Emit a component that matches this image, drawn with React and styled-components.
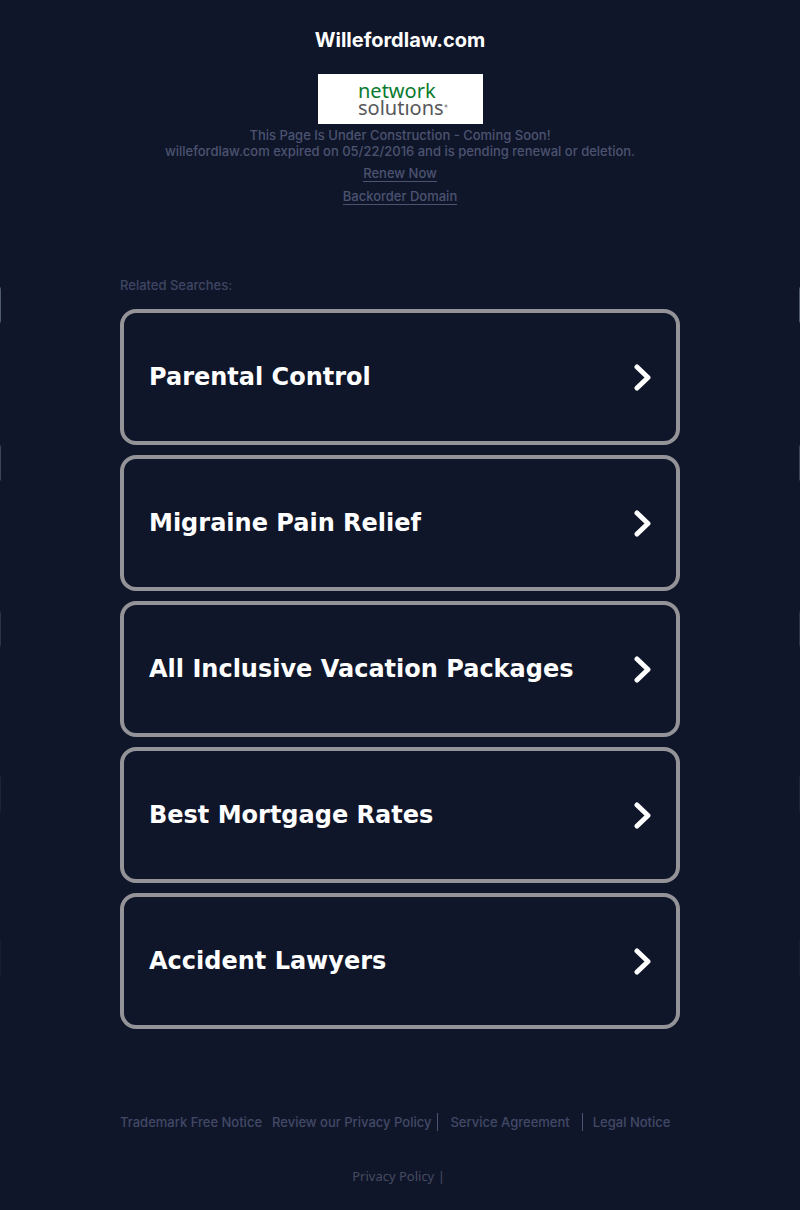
import React from "react";
import styled, { createGlobalStyle } from "styled-components";

const GlobalStyle = createGlobalStyle`
  * {
    box-sizing: border-box;
  }
  body {
    margin: 0;
    background: #10162a;
    color: #4b5370;
    font-family: Inter, "Open Sans", sans-serif;
    font-size: 13px;
    font-weight: 500;
    line-height: 16px;
  }
`;

const Page = styled.div`
  position: relative;
  overflow: hidden;
  padding: 28px 0 26px;
`;

const Header = styled.header`
  display: flex;
  flex-direction: column;
  align-items: center;
  text-align: center;
`;

const Title = styled.h1`
  margin: 0 0 22px;
  color: #fff;
  font-size: 20px;
  font-weight: 700;
  line-height: 24px;
`;

const Logo = styled.svg`
  display: block;
  width: 165px;
  height: 50px;
  margin-bottom: 3px;
  background: #fff;
  font-family: "Noto Sans", sans-serif;
  font-weight: 400;
`;

const Notice = styled.p`
  margin: 0;
`;

const HeaderLink = styled.a`
  margin-top: 6px;
  border-bottom: 1px solid #4b5370;
  color: inherit;
  text-decoration: none;
`;

const Main = styled.main`
  width: 70%;
  margin: 72px auto 0;
`;

const ListTitle = styled.h2`
  margin: 0 0 16px;
  color: #3f4663;
  font-size: 13px;
  font-weight: 500;
`;

const List = styled.ul`
  display: flex;
  flex-direction: column;
  gap: 10px;
  margin: 0;
  padding: 0;
  list-style: none;
`;

const Card = styled.a`
  display: flex;
  align-items: center;
  justify-content: space-between;
  padding: 50px 24px 50px 25px;
  border: 4px solid #949398;
  border-radius: 16px;
  color: #fff;
  font-family: "DejaVu Sans", sans-serif;
  font-size: 24px;
  font-weight: 700;
  line-height: 28px;
  text-decoration: none;
`;

const Chevron = styled.svg`
  flex: none;
  width: 18px;
  height: 28px;
`;

const Footer = styled.footer`
  width: 70%;
  margin: 84px auto 0;
`;

const FooterLinks = styled.nav`
  display: flex;
  align-items: center;
`;

const FooterLink = styled.a`
  padding-right: ${(props) => props.$after || 0}px;
  padding-left: ${(props) => props.$before || 0}px;
  border-right: ${(props) => (props.$divider ? "1px solid #4b5370" : "0")};
  color: #424966;
  line-height: 18px;
  text-decoration: none;
  white-space: nowrap;
`;

const Policy = styled.div`
  margin-top: 37px;
  padding-right: 3px;
  color: #454b60;
  font-family: "Noto Sans", sans-serif;
  font-weight: 400;
  text-align: center;

  a {
    color: inherit;
    text-decoration: none;
  }
`;

const Ring = styled.div`
  position: absolute;
  top: ${(props) => props.$top}px;
  right: -1px;
  left: -1px;
  height: 36px;
  border: solid #8fa0b8;
  border-width: 0 2px;
  border-radius: 2px / 18px;
  opacity: ${(props) => props.$fade};
  pointer-events: none;
`;

const rings = [
  { top: 287, fade: 0.5 },
  { top: 445, fade: 0.35 },
  { top: 611, fade: 0.2 },
  { top: 776, fade: 0.1 },
  { top: 940, fade: 0.06 },
];

const searches = [
  "Parental Control",
  "Migraine Pain Relief",
  "All Inclusive Vacation Packages",
  "Best Mortgage Rates",
  "Accident Lawyers",
];

const footerLinks = [
  { label: "Trademark Free Notice", after: 10 },
  { label: "Review our Privacy Policy", after: 6, divider: true },
  { label: "Service Agreement", before: 12, after: 12, divider: true },
  { label: "Legal Notice", before: 10 },
];

function NetworkLogo() {
  return (
    <Logo viewBox="0 0 165 50" role="img" aria-label="network solutions">
      <text x="40" y="24" fontSize="20" fill="#087a2c">
        network
      </text>
      <text x="40" y="41" fontSize="20" fill="#56575c">
        solutıons
      </text>
      <circle cx="128" cy="32" r="1" fill="none" stroke="#77787c" strokeWidth="1" />
    </Logo>
  );
}

function SearchCard({ label }) {
  return (
    <li>
      <Card href="#">
        {label}
        <Chevron viewBox="0 0 18 28" aria-hidden="true">
          <path
            d="M3 4 L14 14.5 L3 25"
            fill="none"
            stroke="#fff"
            strokeWidth="5"
            strokeLinecap="round"
            strokeLinejoin="round"
          />
        </Chevron>
      </Card>
    </li>
  );
}

function App() {
  return (
    <Page>
      <GlobalStyle />
      {rings.map((ring) => (
        <Ring key={ring.top} $top={ring.top} $fade={ring.fade} />
      ))}
      <Header>
        <Title>Willefordlaw.com</Title>
        <NetworkLogo />
        <Notice>This Page Is Under Construction - Coming Soon!</Notice>
        <Notice>
          willefordlaw.com expired on 05/22/2016 and is pending renewal or
          deletion.
        </Notice>
        <HeaderLink href="#">Renew Now</HeaderLink>
        <HeaderLink href="#">Backorder Domain</HeaderLink>
      </Header>
      <Main>
        <ListTitle>Related Searches:</ListTitle>
        <List>
          {searches.map((label) => (
            <SearchCard key={label} label={label} />
          ))}
        </List>
      </Main>
      <Footer>
        <FooterLinks>
          {footerLinks.map((link) => (
            <FooterLink
              key={link.label}
              href="#"
              $before={link.before}
              $after={link.after}
              $divider={link.divider}
            >
              {link.label}
            </FooterLink>
          ))}
        </FooterLinks>
        <Policy>
          <a href="#">Privacy Policy</a> |
        </Policy>
      </Footer>
    </Page>
  );
}

export default App;
